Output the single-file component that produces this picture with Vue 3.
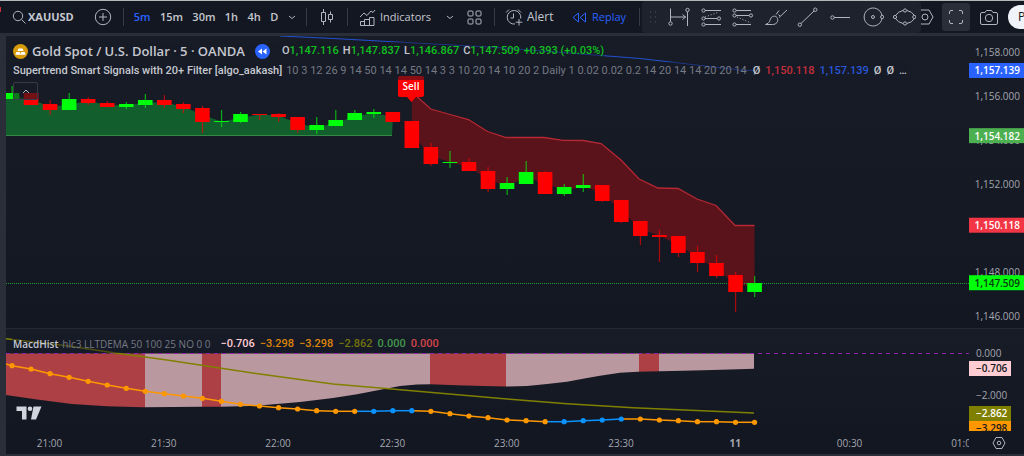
<script setup>
const STEP = 19.04
const xAt = (i) => 6 + STEP * i

const intervals = ['5m', '15m', '30m', '1h', '4h', 'D']

/* body top, body bottom, wick high, wick low, rising */
const bars = [
  [57, 63, 50, 63, 1], [57, 69, 57, 69, 0], [68, 74, 64, 79, 0], [63, 74, 57, 74, 1], [63, 67, 61, 69, 0],
  [67, 71, 65, 71, 0], [68, 71, 66, 73, 1], [64, 69, 58, 72, 1], [64, 69, 59, 72, 0], [68, 73, 66, 77, 0],
  [72, 86, 70, 97, 0], [85, 86, 74, 91, 1], [78, 86, 76, 87, 1], [78, 79, 78, 84, 0], [78, 81, 77, 86, 0],
  [81, 94, 81, 97, 0], [89, 94, 81, 98, 1], [84, 90, 74, 90, 1], [77, 84, 74, 84, 1], [76, 78, 73, 82, 1],
  [76, 86, 76, 86, 0], [85, 112, 85, 112, 0], [111, 128, 107, 130, 0], [126, 127, 115, 132, 1],
  [126, 135, 122, 135, 0], [135, 153, 131, 156, 0], [147, 153, 141, 159, 1], [136, 148, 125, 148, 1],
  [136, 158, 135, 158, 0], [151, 158, 148, 160, 1], [149, 152, 138, 156, 1], [149, 165, 149, 166, 0],
  [164, 186, 164, 187, 0], [185, 200, 185, 209, 0], [199, 201, 194, 226, 0], [200, 217, 200, 221, 0],
  [216, 227, 210, 236, 0], [227, 240, 219, 242, 0], [239, 256, 236, 276, 0], [247, 256, 240, 261, 1],
].map(([top, bottom, high, low, up], i) => ({
  x: xAt(i), top, bottom, high, low, color: up ? '#00ff0a' : '#ff0000',
}))

const pairs = (list) => list.map((p) => p.join(',')).join(' ')
const mids = (from, to) => bars.slice(from, to).map((b) => [b.x, (b.top + b.bottom) / 2])

const upFill = pairs([[0, 60], ...mids(0, 21), [386, 100], [0, 100]])
const stopLine = [
  [405.8, 56], [424.8, 73], [444, 78.5], [462.5, 83.5], [481.5, 95.5], [500, 101.5], [538, 101.5], [557, 104.3],
  [577, 104.5], [595, 107.5], [615, 124], [633, 143], [652, 152], [672, 152.5], [691, 163], [710, 169.5],
  [729, 189.5], [748.5, 189.5],
]
const downFill = pairs([...stopLine, ...mids(21, 40).reverse()])
const downLine = pairs(stopLine)

const histEdge = [
  [0, 66], [31, 70.5], [66, 75], [101, 77.3], [137, 78.3], [167, 78], [194, 77.7], [215, 77.7], [244, 77],
  [259, 76], [294, 73], [327, 69], [351, 65.3], [377, 60.3], [394, 57], [411, 55.5], [424, 55.2], [451, 56.2],
  [477, 57], [500, 57.6], [521, 57], [541, 55], [561, 52.7], [577, 49.7], [594, 46.7], [614, 43.7], [632, 42.7],
  [654, 42.3], [677, 41.7], [707, 41], [748, 39.7],
]
const histShape = pairs([[0, 24.5], ...histEdge, [748, 24.5]])
const histBands = [
  [0, 139, 0], [139, 196, 1], [196, 215, 0], [215, 424, 1], [424, 500, 0], [500, 633, 1], [633, 653, 0], [653, 749, 1],
].map(([x, end, soft]) => ({ x, width: end - x, color: soft ? '#ba989f' : '#ac4044' }))

const macd = [
  36.7, 40, 44.7, 48.3, 52.3, 56, 59.3, 62.3, 64.7, 67, 69.3, 72.3, 75.3, 77, 78.7, 80, 81.7, 82.3, 82.3, 82.3,
  81.7, 81.7, 82.3, 84.7, 87, 88.7, 91, 91.7, 92.7, 92.7, 91.7, 91, 90, 90, 91, 91.7, 92.7, 92.7, 93.3, 93.3,
].map((y, i) => ({
  x: xAt(i), y, color: (i >= 19 && i <= 21) || (i >= 29 && i <= 32) ? '#0a93ff' : '#ff9800',
}))
const signal = pairs([
  [0, 9.7], [61, 16.7], [104, 23.3], [161, 31], [250, 44.5], [327, 55], [377, 59.3], [504, 70.3], [561, 74.7],
  [627, 78.7], [748, 84],
])

const priceY = (price) => 15.5 + (1158 - price) * 22.04
const format = (v) => v.toLocaleString('en-US', { minimumFractionDigits: 3 })
const priceTicks = [1158, 1156, 1154, 1152, 1148, 1146].map((p) => ({ y: priceY(p), text: format(p) }))
const priceTags = [
  { price: 1157.139, bg: '#2962ff', fg: '#fff' },
  { price: 1154.182, bg: '#4caf50', fg: '#fff' },
  { price: 1150.118, bg: '#f23645', fg: '#fff' },
  { price: 1147.509, bg: '#00ff0a', fg: '#0c3a12' },
].map((t) => ({ ...t, y: priceY(t.price), text: format(t.price) }))

const macdTags = [
  { y: 39, text: '−0.706', bg: '#ffcdd2', fg: '#131722' },
  { y: 99, text: '−3.298', bg: '#ff9800', fg: '#131722' },
  { y: 84, text: '−2.862', bg: '#808000', fg: '#fff' },
]
const times = ['21:00', '21:30', '22:00', '22:30', '23:00', '23:30', '11', '00:30', '01:00'].map((text, i) => ({
  text, x: 43.5 + i * 114.3,
}))
</script>

<template>
  <div class="app">
    <header class="toolbar">
      <i class="alert-dot"></i>
      <button class="tool symbol">
        <svg width="14" height="14" viewBox="0 0 14 14"><circle cx="6" cy="6" r="4.7" /><path d="M9.5 9.5l4 4" /></svg>
        <b>XAUUSD</b>
      </button>
      <button class="tool w30" aria-label="Compare symbol">
        <svg width="18" height="18" viewBox="0 0 18 18"><circle cx="9" cy="9" r="7.7" /><path d="M9 5v8M5 9h8" /></svg>
      </button>
      <i class="sep"></i>
      <nav class="intervals">
        <button v-for="(t, i) in intervals" :key="t" class="tool" :class="{ active: i === 0 }">{{ t }}</button>
      </nav>
      <button class="tool w18" aria-label="More intervals">
        <svg width="8" height="5" viewBox="0 0 8 5"><path d="M1 1l3 2.5L7 1" /></svg>
      </button>
      <i class="sep"></i>
      <button class="tool w30" aria-label="Chart type">
        <svg width="14" height="18" viewBox="0 0 14 18">
          <path d="M1.5 4.5h4v9h-4zM3.5 1v3.5M3.5 13.5V17M8.5 6.5h4v5h-4zM10.5 3.5v3M10.5 11.5v3" />
        </svg>
      </button>
      <i class="sep"></i>
      <button class="tool indicators">
        <svg width="17" height="17" viewBox="0 0 17 17">
          <path d="M1.5 16.5v-4h4v4zM5.5 16.5v-6h5v6M10.5 16.5V8.5h4.5v8zM1.5 16.5h13M1 8l4-4 3 2.5L12 2l2 1.5L16 1" />
        </svg>
        Indicators
      </button>
      <button class="tool w18" aria-label="Favorite indicators">
        <svg width="8" height="5" viewBox="0 0 8 5"><path d="M1 1l3 2.5L7 1" /></svg>
      </button>
      <button class="tool w30" aria-label="Layouts">
        <svg width="15" height="15" viewBox="0 0 15 15">
          <rect x="1" y="1" width="5" height="5" rx="1" /><rect x="9" y="1" width="5" height="5" rx="1" />
          <rect x="1" y="9" width="5" height="5" rx="1" /><rect x="9" y="9" width="5" height="5" rx="1" />
        </svg>
      </button>
      <i class="sep"></i>
      <button class="tool alert">
        <svg width="18" height="18" viewBox="0 0 18 18">
          <path d="M10 16a6.8 6.8 0 1 1 5.7-5.5M8.5 5.5v4.5H5.5M1 4.5l3-3M13 1.5l3 3M14 11v6.5M10.7 14.2h6.6" />
        </svg>
        Alert
      </button>
      <button class="tool replay">
        <svg width="15" height="11" viewBox="0 0 15 11"><path d="M6.5 1v9L1 5.500zM13.5 1v9L8 5.500z" /></svg>
        Replay
      </button>
      <i class="sep"></i>
      <div class="right">
        <button class="tool w18" aria-label="Settings">
          <svg width="18" height="18" viewBox="0 0 18 18"><path d="M5 2h8l4 7-4 7H5L1 9z" /><circle cx="9" cy="9" r="3" /></svg>
        </button>
        <button class="tool full" aria-label="Fullscreen">
          <svg width="16" height="16" viewBox="0 0 16 16">
            <path d="M1.5 5V3a1.5 1.5 0 0 1 1.5-1.5h2M11 1.5h2A1.5 1.5 0 0 1 14.5 3v2M14.5 11v2a1.5 1.5 0 0 1-1.5 1.5h-2M5 14.5H3A1.5 1.5 0 0 1 1.5 13v-2" />
          </svg>
        </button>
        <button class="tool camera" aria-label="Snapshot">
          <svg width="20" height="17" viewBox="0 0 20 17">
            <path d="M1.5 5A1.5 1.5 0 0 1 3 3.5h3L7.5 1.5h5L14 3.5h3A1.5 1.5 0 0 1 18.5 5v9a1.5 1.5 0 0 1-1.5 1.5H3A1.5 1.5 0 0 1 1.5 14z" />
            <circle cx="10" cy="9" r="3.7" />
          </svg>
        </button>
        <button class="publish">P</button>
      </div>

      <div class="drawing-bar">
        <svg class="grip" width="8" height="12" viewBox="0 0 8 12">
          <path d="M1 1h1M6 1h1M1 6h1M6 6h1M1 11h1M6 11h1" />
        </svg>
        <button class="tool w32" aria-label="Date range">
          <svg width="24" height="24" viewBox="0 0 24 24">
            <path d="M2.5 3.5v13M19.5 7v14M3 12h15M14.5 9.5L17.5 12l-3 2.5" />
            <circle cx="2.5" cy="18.5" r="1.7" /><circle cx="19.5" cy="5" r="1.7" />
          </svg>
        </button>
        <button class="tool w32" aria-label="Fib retracement">
          <svg width="24" height="24" viewBox="0 0 24 24">
            <path d="M5 5.5h16M5 13.5h12M5 19.5h16" /><path d="M5 12l14-5" stroke-dasharray="1 2" />
            <circle cx="3.5" cy="5.5" r="1.6" /><circle cx="3.5" cy="13.5" r="1.6" />
            <circle cx="19" cy="13.5" r="1.6" /><circle cx="3.5" cy="19.5" r="1.6" />
          </svg>
        </button>
        <button class="tool w32" aria-label="Trend-based fib">
          <svg width="24" height="24" viewBox="0 0 24 24">
            <path d="M4 5.5h15M4 10.5h13M4 19.5h15" /><path d="M5 12l14 6" stroke-dasharray="1 2" />
            <circle cx="2.5" cy="5.5" r="1.6" /><circle cx="2.5" cy="10.5" r="1.6" />
            <circle cx="19" cy="10.5" r="1.6" /><circle cx="2.5" cy="19.5" r="1.6" />
          </svg>
        </button>
        <button class="tool w32" aria-label="Brush">
          <svg width="24" height="24" viewBox="0 0 24 24">
            <path d="M1.5 19.5h7c4 0 6-3 5-6s-5-3-6.5-.5-1 5-5.5 6.5zM12 9.5l3-4M15 12.5l8-7.5M14.5 9.5l1.5 1.5" />
          </svg>
        </button>
        <button class="tool w32" aria-label="Trend line">
          <svg width="24" height="24" viewBox="0 0 24 24">
            <path d="M5 18.5L18 6" /><circle cx="3.8" cy="19.7" r="1.7" /><circle cx="19.3" cy="4.7" r="1.7" />
          </svg>
        </button>
        <button class="tool w32" aria-label="Horizontal ray">
          <svg width="24" height="24" viewBox="0 0 24 24"><path d="M6 12.5h16" /><circle cx="4.5" cy="12.5" r="1.7" /></svg>
        </button>
        <button class="tool w32" aria-label="Circle">
          <svg width="24" height="24" viewBox="0 0 24 24">
            <path d="M22 10.5a9 9 0 1 0 0 3" /><circle cx="13" cy="12" r="1.5" /><circle cx="22.2" cy="12" r="1.6" />
          </svg>
        </button>
        <button class="tool w32" aria-label="Ellipse">
          <svg width="24" height="24" viewBox="0 0 24 24">
            <path d="M3.5 10.5Q6 6.5 11 5.5M15 5.5Q20 6.5 22.5 10.5M3.5 13.5Q6 17.5 11 18.5M15 18.5Q20 17.5 22.5 13.5" />
            <circle cx="13" cy="5.5" r="1.6" /><circle cx="13" cy="18.5" r="1.6" />
            <circle cx="3" cy="12" r="1.6" /><circle cx="22.3" cy="12" r="1.6" />
          </svg>
        </button>
      </div>
    </header>

    <main class="chart">
      <section class="pane price">
        <div class="plot">
          <svg class="canvas">
            <polygon :points="upFill" fill="#125f2d" />
            <path d="M0 99.5H386" stroke="#348a45" />
            <polygon :points="downFill" fill="#5a131a" />
            <polyline :points="downLine" fill="none" stroke="#b52834" stroke-width="1.3" />
            <path d="M274 0L324 2.3 491 11.5 634 22.5 734 34 749 34.5" fill="none" stroke="#2450d0" />
            <line x1="0" y1="247.5" x2="100%" y2="247.5" stroke="#20a038" stroke-dasharray="1 1" />
            <g v-for="b in bars" :key="b.x" :fill="b.color">
              <rect :x="b.x - 0.5" :y="b.high" width="1.2" :height="b.low - b.high" opacity="0.65" />
              <rect :x="b.x - 7.3" :y="b.top" width="14.6" :height="b.bottom - b.top" />
            </g>
            <path d="M394 40h22a2 2 0 0 1 2 2v17a2 2 0 0 1-2 2h-6l-4.5 5-4.5-5h-7a2 2 0 0 1-2-2V42a2 2 0 0 1 2-2z" fill="#ff0000" />
            <text x="405" y="54" class="sell">Sell</text>
          </svg>
          <div class="legend">
            <div class="row title">
              <svg width="15" height="15" viewBox="0 0 15 15">
                <circle cx="7.5" cy="7.5" r="7.5" fill="#d69a0b" />
                <path d="M5.5 4.5h4l1 2.5h-6zM3.3 8h3.4l1 2.7H2.3zM8.3 8h3.4l1 2.7H7.3z" fill="#fff" />
              </svg>
              <h1>Gold Spot / U.S. Dollar · 5 · OANDA</h1>
              <svg width="15" height="15" viewBox="0 0 15 15">
                <circle cx="7.5" cy="7.5" r="7.5" fill="#2962ff" />
                <path d="M7 4.5v6l-4-3zM11.5 4.5v6l-4-3z" fill="#fff" />
              </svg>
              <p class="ohlc">
                <span>O<em>1,147.116</em></span><span>H<em>1,147.837</em></span><span>L<em>1,146.867</em></span>
                <span>C<em>1,147.509</em></span><em>+0.393 (+0.03%)</em>
              </p>
            </div>
            <div class="row study">
              <span class="name">Supertrend Smart Signals with 20+ Filter [algo_aakash]</span>
              <span class="inputs">10 3 12 26 9 14 50 14 14 50 14 3 3 10 20 14 10 20 2 Daily 1 0.02 0.02 0.2 14 20 14 14 20 20 14</span>
              <span class="vals"><span>Ø</span><span class="red">1,150.118</span><span class="blue">1,157.139</span><span>Ø</span><span>Ø</span><span>…</span></span>
            </div>
            <button class="collapse" aria-label="Hide indicator legend">
              <svg width="8" height="5" viewBox="0 0 8 5"><path d="M1 4l3-3 3 3" /></svg>
            </button>
          </div>
        </div>
        <svg class="axis">
          <text v-for="t in priceTicks" :key="t.text" x="51" :y="t.y + 4" text-anchor="end">{{ t.text }}</text>
          <g v-for="t in priceTags" :key="t.text">
            <rect x="0" :y="t.y - 7.5" width="100%" height="15" :fill="t.bg" />
            <text class="tag" x="51" :y="t.y + 4" text-anchor="end" :fill="t.fg">{{ t.text }}</text>
          </g>
        </svg>
      </section>

      <section class="pane macd">
        <div class="plot">
          <svg class="canvas">
            <defs><clipPath id="hist"><polygon :points="histShape" /></clipPath></defs>
            <g clip-path="url(#hist)">
              <rect v-for="b in histBands" :key="b.x" :x="b.x" y="20" :width="b.width" height="64" :fill="b.color" />
            </g>
            <line x1="0" y1="24.5" x2="100%" y2="24.5" stroke="#8e24aa" stroke-dasharray="4 4" />
            <polyline :points="signal" fill="none" stroke="#808000" stroke-width="1.5" />
            <path d="M0 35L6 36.7" stroke="#ff9800" stroke-width="1.5" />
            <line
              v-for="(p, i) in macd.slice(1)" :key="'l' + i" :x1="macd[i].x" :y1="macd[i].y" :x2="p.x" :y2="p.y"
              :stroke="p.color" stroke-width="1.5"
            />
            <circle v-for="p in macd" :key="p.x" :cx="p.x" :cy="p.y" r="2.6" :fill="p.color" />
            <path d="M10.5 77.5h10v13H16v-8.5h-5.5zM27.5 77.5h8L30 90.5h-5z" fill="#d1d4dc" />
            <circle cx="24" cy="79.7" r="2.3" fill="#d1d4dc" />
          </svg>
          <div class="legend">
            <div class="row study">
              <span class="name">MacdHist</span>
              <span class="inputs">hlc3 LLTDEMA 50 100 25 NO 0 0</span>
              <span class="vals">
                <span class="pink">−0.706</span><span class="orange">−3.298</span><span class="orange">−3.298</span>
                <span class="olive">−2.862</span><span class="green">0.000</span><span class="rose">0.000</span>
              </span>
            </div>
          </div>
        </div>
        <svg class="axis">
          <text x="7" y="28">0.000</text>
          <text x="7" y="70">−2.000</text>
          <g v-for="t in macdTags" :key="t.text">
            <rect x="0" :y="t.y - 7" width="42" height="15" :fill="t.bg" />
            <text class="tag" x="7" :y="t.y + 4" :fill="t.fg">{{ t.text }}</text>
          </g>
        </svg>
      </section>

      <footer class="times">
        <svg class="canvas">
          <text v-for="t in times" :key="t.text" :x="t.x" y="16" text-anchor="middle" :class="{ day: t.text === '11' }">{{ t.text }}</text>
        </svg>
        <button class="tool gear" aria-label="Axis settings">
          <svg width="14" height="14" viewBox="0 0 14 14"><path d="M4 1.5h6L13 7l-3 5.5H4L1 7z" /><circle cx="7" cy="7" r="1.8" /></svg>
        </button>
      </footer>
    </main>
  </div>
</template>

<style>
html,
body {
  background: #131722;
  overflow: hidden;
}
</style>

<style scoped>
* {
  box-sizing: border-box;
}
.app {
  min-height: 100vh;
  border-top: 1px solid #b4b8b8;
  background: #131722;
  color: #c5c8d0;
  font: 12px/16px "Open Sans", "Noto Sans", sans-serif;
}
button {
  border: 0;
  padding: 0;
  background: none;
  color: inherit;
  font: inherit;
}
svg {
  display: block;
  flex: none;
}
.toolbar {
  position: relative;
  display: flex;
  align-items: center;
  height: 32px;
  overflow: hidden;
}
.alert-dot {
  flex: none;
  width: 1px;
  height: 5px;
  margin-bottom: 16px;
  background: #c92f3c;
}
.tool {
  display: flex;
  flex: none;
  align-items: center;
  justify-content: center;
  height: 28px;
  white-space: nowrap;
  font-weight: 500;
}
.tool svg,
.grip,
.collapse svg {
  fill: none;
  stroke: #b2b5be;
  stroke-width: 1;
}
.symbol {
  justify-content: flex-start;
  gap: 2px;
  width: 76px;
  margin-left: 11px;
  font-size: 11px;
}
.w18 {
  width: 18px;
}
.w30 {
  width: 30px;
}
.w32 {
  width: 32px;
}
.sep {
  flex: none;
  width: 1px;
  height: 18px;
  margin: 0 5px;
  background: #363a45;
}
.intervals {
  display: flex;
  flex: none;
  justify-content: space-around;
  width: 154px;
}
.intervals .tool {
  font-size: 11px;
  font-weight: 600;
}
.active,
.replay {
  color: #2962ff;
}
.indicators {
  justify-content: flex-start;
  gap: 4px;
  width: 88px;
  padding-left: 6px;
  font-size: 11px;
}
.alert {
  justify-content: flex-start;
  gap: 4px;
  width: 66px;
  padding-left: 5px;
}
.replay {
  justify-content: flex-start;
  gap: 5px;
  width: 68px;
  padding-left: 6px;
  font-size: 11px;
}
.replay svg {
  stroke: #2962ff;
}
.right {
  display: flex;
  flex: none;
  align-items: center;
  margin-left: auto;
}
.full {
  width: 28px;
  margin: 0 9px 0 8px;
  border-radius: 3px;
  background: #2a2e39;
}
.camera {
  width: 20px;
  margin-right: 9px;
}
.publish {
  width: 16px;
  height: 24px;
  padding-left: 10px;
  border-radius: 12px 0 0 12px;
  background: #f0f3fa;
  color: #131722;
  text-align: left;
}
.drawing-bar {
  position: absolute;
  top: 0;
  left: 642px;
  display: flex;
  align-items: center;
  height: 32px;
  padding: 0 1px 0 7px;
  border-radius: 4px;
  background: #1e222d;
}
.grip {
  margin-right: 7px;
  stroke: #50535e;
}
.chart {
  border: solid #2a2e39;
  border-width: 3px 0 2px 6px;
}
.pane,
.times {
  display: flex;
  background: linear-gradient(#181c27, #131722);
}
.price {
  height: 292px;
}
.macd {
  height: 103px;
  border-top: 1px solid #242833;
}
.times {
  height: 23px;
  background: #131722;
}
.plot {
  position: relative;
  flex: 1;
  min-width: 0;
  overflow: hidden;
}
.canvas {
  flex: 1;
  width: 100%;
  min-width: 0;
  height: 100%;
  overflow: hidden;
}
.axis {
  width: 55px;
  height: 100%;
  overflow: hidden;
}
.axis,
.times .canvas {
  fill: #a3a6af;
  font-size: 10px;
  font-weight: 500;
}
.tag {
  font-weight: 600;
}
.sell {
  fill: #fff;
  font-size: 10px;
  font-weight: 600;
  text-anchor: middle;
}
.day {
  font-weight: 700;
}
.gear {
  width: 55px;
  padding-left: 5px;
  height: 23px;
}
.legend {
  position: absolute;
  top: 6px;
  left: 6px;
}
.row {
  display: flex;
  align-items: center;
  width: fit-content;
  height: 18px;
  padding-left: 1px;
  background: #161a2580;
  white-space: nowrap;
}
.title {
  margin-bottom: 2px;
}
h1 {
  margin: 0 10px 0 4px;
  font-size: 13px;
  font-weight: 600;
}
.ohlc {
  display: flex;
  gap: 4px;
  margin: 0 0 0 12px;
  font-family: Roboto, "Open Sans", sans-serif;
  font-size: 11px;
  font-weight: 500;
}
em {
  color: #0fc01f;
  font-style: normal;
}
.study {
  gap: 4px;
  font-family: Roboto, "Open Sans", sans-serif;
  font-size: 11px;
}
.name {
  font-weight: 500;
}
.inputs {
  color: #757983;
}
.vals {
  display: flex;
  gap: 5px;
  margin-left: 2px;
  font-weight: 500;
}
.macd .name,
.macd .inputs {
  font-family: "Open Sans", "Noto Sans", sans-serif;
  font-size: 10px;
}
.macd .name {
  font-weight: 600;
}
.macd .vals {
  margin-left: 6px;
}
.red {
  color: #c52e3b;
}
.blue {
  color: #2857d9;
}
.pink {
  color: #ffcdd2;
}
.orange {
  color: #dd850b;
}
.olive {
  color: #73740b;
}
.green {
  color: #43994a;
}
.rose {
  color: #d3454b;
}
.collapse {
  display: flex;
  align-items: center;
  justify-content: center;
  width: 25px;
  height: 18px;
  margin: 2px 0 0 1px;
  border: 1px solid #363a45;
  border-radius: 2px;
  background: #181c2799;
}
</style>
